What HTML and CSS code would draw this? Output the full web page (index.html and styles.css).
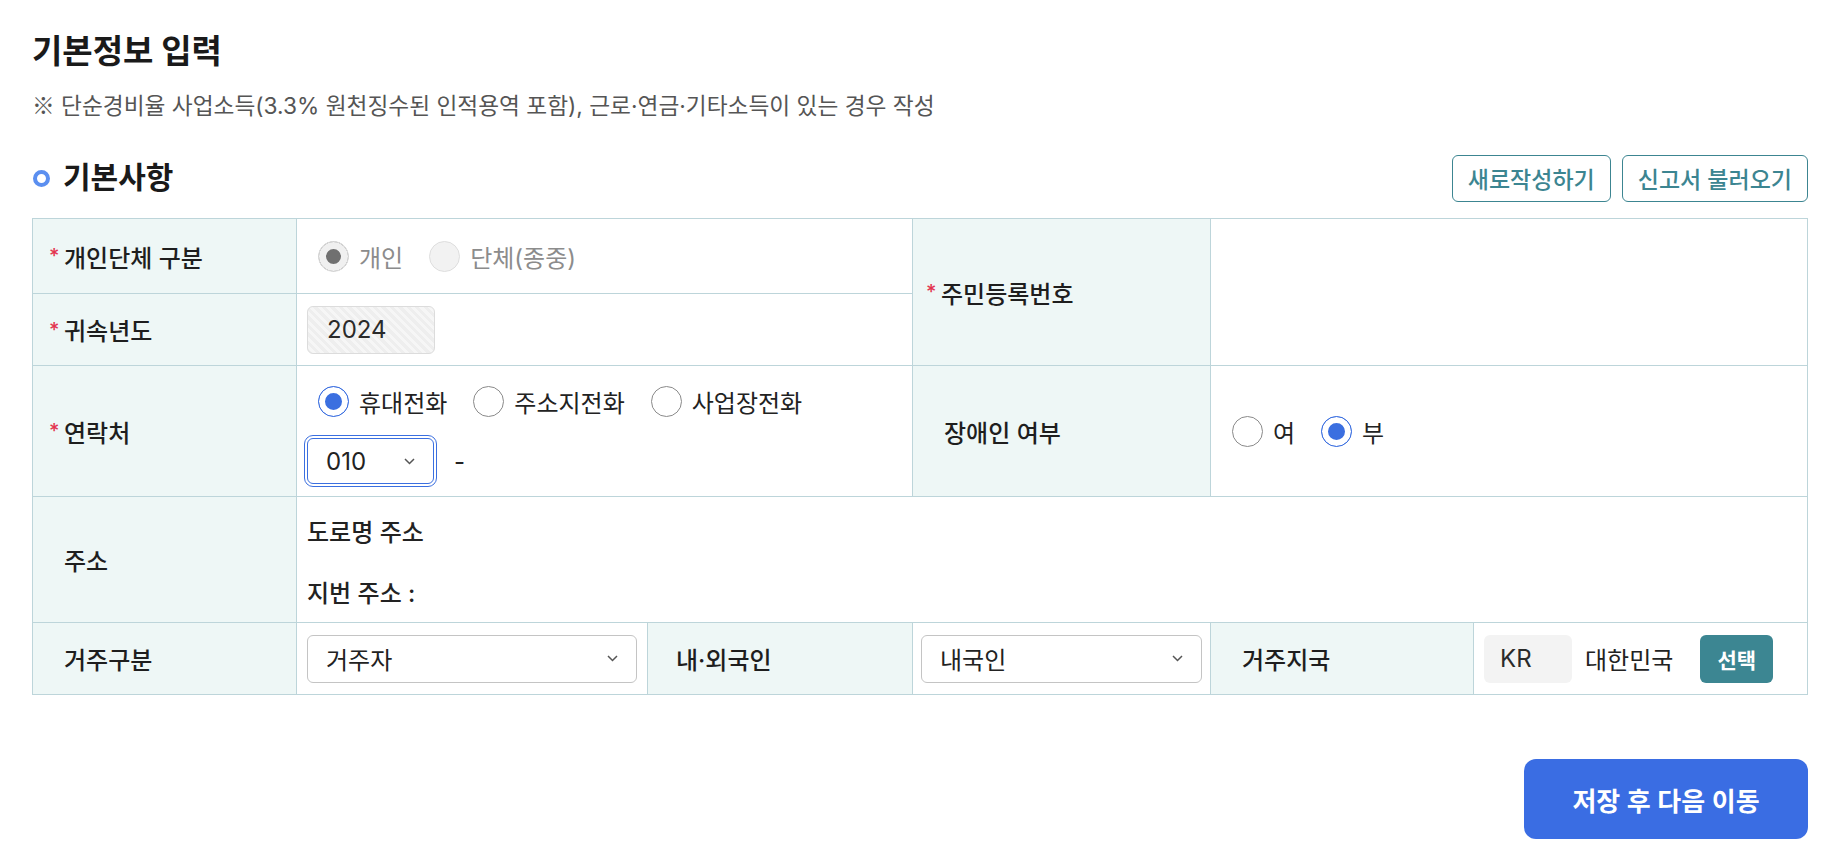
FILE: index.html
```html
<!DOCTYPE html>
<html lang="ko">
<head>
<meta charset="utf-8">
<title>기본정보 입력</title>
<link rel="stylesheet" href="styles.css">
</head>
<body>
<div class="page">
  <h1 class="title">기본정보 입력</h1>
  <p class="desc"><span class="mark">※</span> 단순경비율 사업소득(3.3% 원천징수된 인적용역 포함), 근로·연금·기타소득이 있는 경우 작성</p>

  <div class="section-head">
    <h2 class="section-title"><span class="dot"></span>기본사항</h2>
    <div class="head-actions">
      <button class="btn-outline" type="button">새로작성하기</button>
      <button class="btn-outline" type="button">신고서 불러오기</button>
    </div>
  </div>

  <div class="form-grid">
    <div class="th"><span class="req">*</span>개인단체 구분</div>
    <div class="td span2">
      <div class="radios">
        <label class="opt is-disabled"><input class="radio" type="radio" name="kind" checked disabled><span>개인</span></label>
        <label class="opt is-disabled"><input class="radio" type="radio" name="kind" disabled><span>단체(종중)</span></label>
      </div>
    </div>
    <div class="th rows2 th-narrow"><span class="req">*</span>주민등록번호</div>
    <div class="td span2 rows2"></div>

    <div class="th"><span class="req">*</span>귀속년도</div>
    <div class="td span2"><div class="readonly">2024</div></div>

    <div class="th"><span class="req">*</span>연락처</div>
    <div class="td span2 contact">
      <div class="radios">
        <label class="opt"><input class="radio" type="radio" name="tel" checked><span>휴대전화</span></label>
        <label class="opt"><input class="radio" type="radio" name="tel"><span>주소지전화</span></label>
        <label class="opt"><input class="radio" type="radio" name="tel"><span>사업장전화</span></label>
      </div>
      <div class="phone">
        <div class="select select-sm is-focus"><span>010</span><svg class="chev" width="11" height="7" viewBox="0 0 11 7"><path d="M1 1l4.5 4.5L10 1" fill="none" stroke="#555" stroke-width="1.5"/></svg></div>
        <span class="dash">-</span>
      </div>
    </div>
    <div class="th">장애인 여부</div>
    <div class="td span2">
      <div class="radios">
        <label class="opt"><input class="radio" type="radio" name="dis"><span>여</span></label>
        <label class="opt"><input class="radio" type="radio" name="dis" checked><span>부</span></label>
      </div>
    </div>

    <div class="th">주소</div>
    <div class="td span5 address">
      <div class="addr-line">도로명 주소</div>
      <div class="addr-line">지번 주소 :</div>
    </div>

    <div class="th">거주구분</div>
    <div class="td">
      <div class="select select-full"><span>거주자</span><svg class="chev" width="11" height="7" viewBox="0 0 11 7"><path d="M1 1l4.5 4.5L10 1" fill="none" stroke="#555" stroke-width="1.5"/></svg></div>
    </div>
    <div class="th th-narrow">내·외국인</div>
    <div class="td td-tight">
      <div class="select select-full"><span>내국인</span><svg class="chev" width="11" height="7" viewBox="0 0 11 7"><path d="M1 1l4.5 4.5L10 1" fill="none" stroke="#555" stroke-width="1.5"/></svg></div>
    </div>
    <div class="th">거주지국</div>
    <div class="td">
      <div class="code-box">KR</div>
      <span class="country">대한민국</span>
      <button class="btn-select" type="button">선택</button>
    </div>
  </div>

  <div class="footer">
    <button class="btn-primary" type="button">저장 후 다음 이동</button>
  </div>
</div>
</body>
</html>
```

FILE: styles.css
```css
* { box-sizing: border-box; }

body {
  margin: 0;
  background: #fff;
  color: #222;
  font-family: "Inter", "Noto Sans CJK KR", "Noto Sans", sans-serif;
}

.page {
  width: 1808px;
  padding: 31px 0 0 32px;
}

.title {
  margin: 0;
  font-size: 33px;
  line-height: 40px;
  font-weight: 700;
  color: #1a1a1a;
}

.desc {
  margin: 19px 0 0;
  font-size: 22.7px;
  line-height: 30px;
  color: #555;
}

.mark {
  font-family: "Noto Sans CJK KR", sans-serif;
}

.section-head {
  display: flex;
  align-items: center;
  justify-content: space-between;
  height: 48px;
  margin-top: 33px;
}

.section-title {
  display: flex;
  align-items: center;
  margin: 0 0 2px;
  font-size: 30px;
  line-height: 36px;
  font-weight: 700;
  color: #1a1a1a;
}

.dot {
  width: 17px;
  height: 17px;
  border: 4px solid #5b8ff0;
  border-radius: 50%;
  margin: 2px 13px 0 1px;
}

.head-actions {
  display: flex;
  gap: 11px;
}

.btn-outline {
  height: 47px;
  padding: 0 15px;
  border: 1px solid #3c8591;
  border-radius: 6px;
  background: #fff;
  color: #3c8591;
  font-family: inherit;
  font-size: 23px;
  font-weight: 500;
  cursor: pointer;
}

.form-grid {
  display: grid;
  grid-template-columns: 264px 351px 265px 298px 263px 334px;
  grid-template-rows: 75px 72px 131px 126px 72px;
  margin-top: 16px;
  border-top: 1px solid #bdd5da;
  border-left: 1px solid #bdd5da;
}

.th, .td {
  display: flex;
  align-items: center;
  border-right: 1px solid #bdd5da;
  border-bottom: 1px solid #bdd5da;
}

.th {
  padding-left: 31px;
  background: #eef7f6;
  font-size: 24px;
  font-weight: 500;
  color: #1e1e1e;
}

.th-narrow { padding-left: 28px; }

.req {
  display: inline-block;
  width: 15px;
  margin-left: -15px;
  color: #e3344f;
  font-size: 20px;
  vertical-align: -4px;
}

.td {
  padding: 0 10px;
  font-size: 24px;
}

.td-tight { padding: 0 8px; }

.span2 { grid-column: span 2; }
.span5 { grid-column: span 5; }
.rows2 { grid-row: span 2; }

.radios {
  display: flex;
  align-items: center;
  gap: 26px;
  height: 44px;
  padding-left: 11px;
}

.opt {
  display: flex;
  align-items: center;
  gap: 10px;
  font-size: 24px;
  color: #222;
}

.opt.is-disabled { color: #8c8c8c; }

.radio {
  appearance: none;
  -webkit-appearance: none;
  width: 31px;
  height: 31px;
  margin: 0;
  border: 1px solid #8a8a8a;
  border-radius: 50%;
  background: #fff;
}

.radio:checked {
  border-color: #3b6fe0;
  background: #3b6fe0;
  box-shadow: inset 0 0 0 6px #fff;
}

.radio:disabled {
  border-color: #dedede;
  background: #f2f2f2;
}

.radio:disabled:checked {
  background: #707070;
  box-shadow: inset 0 0 0 7px #f0f0f0;
}

.readonly {
  display: flex;
  align-items: center;
  width: 128px;
  height: 48px;
  padding-left: 19px;
  border: 1px solid #dcdcdc;
  border-radius: 6px;
  background: repeating-linear-gradient(45deg, #eeeeee 0 3px, #f6f6f6 3px 6px);
  color: #2a2a2a;
}

.contact {
  flex-direction: column;
  align-items: flex-start;
  padding-top: 13px;
}

.phone {
  display: flex;
  align-items: center;
  margin-top: 15px;
}

.select {
  display: flex;
  align-items: center;
  justify-content: space-between;
  height: 48px;
  padding: 0 18px;
  border: 1px solid #c4c4c4;
  border-radius: 6px;
  background: #fff;
  color: #222;
}

.select-sm {
  width: 127px;
  height: 46px;
}

.select-full { width: 100%; }

.is-focus {
  border-color: #3b6fe0;
  outline: 1px solid #3b6fe0;
  outline-offset: 2px;
}

.chev { flex: none; }

.dash { margin-left: 20px; }

.address {
  flex-direction: column;
  align-items: flex-start;
  justify-content: flex-start;
  gap: 31px;
  padding-top: 21px;
}

.addr-line {
  line-height: 30px;
  font-weight: 500;
}

.code-box {
  display: flex;
  align-items: center;
  width: 88px;
  height: 48px;
  padding-left: 16px;
  border-radius: 6px;
  background: #f3f3f3;
  color: #2a2a2a;
}

.country { margin-left: 13px; }

.btn-select {
  width: 73px;
  height: 48px;
  margin-left: 27px;
  border: 0;
  border-radius: 6px;
  background: #3c8692;
  color: #fff;
  font-family: inherit;
  font-size: 21px;
  font-weight: 700;
}

.footer {
  display: flex;
  justify-content: flex-end;
  margin-top: 64px;
}

.btn-primary {
  width: 284px;
  height: 80px;
  border: 0;
  border-radius: 12px;
  background: #3a6de3;
  color: #fff;
  font-family: inherit;
  font-size: 26px;
  font-weight: 600;
}
```
